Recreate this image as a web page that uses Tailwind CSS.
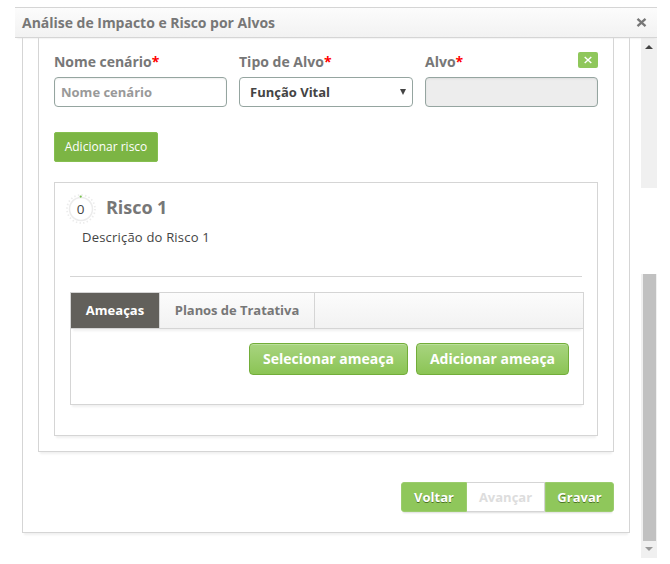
<!DOCTYPE html>
<html lang="pt-BR">
<head>
<meta charset="utf-8">
<title>Análise de Impacto e Risco por Alvos</title>
<script src="https://cdn.jsdelivr.net/npm/@tailwindcss/browser@4"></script>
</head>
<body class="h-[564px] w-[670px] overflow-hidden bg-white pl-[15px] pt-[7px] font-['Open_Sans','Noto_Sans',sans-serif] text-[13px] text-[#777]">
<div class="w-[642px]">
  <header class="relative flex h-[31px] items-center justify-between border-y border-[#d5d5d5] bg-linear-to-b from-[#fcfcfc] to-[#f2f2f2] pl-[7px] pr-[10px] shadow-[0_2px_2px_-2px_#ddd]">
    <h1 class="text-[14px] font-bold leading-5 tracking-[-0.02px]">Análise de Impacto e Risco por Alvos</h1>
    <button aria-label="Fechar"><svg class="block" width="11" height="11" viewBox="0 0 11 11"><path d="M1.5 1.8l8 7.4M9.5 1.8l-8 7.4" stroke="#777" stroke-width="2.3"/></svg></button>
  </header>
  <div class="flex h-[520px] justify-between">
    <main class="ml-[7px] h-[495px] w-[608px] border border-t-0 border-[#d5d5d5] px-[15px] shadow-[0_4px_2px_-2px_#f0f0f0]">
      <section class="h-[414px] w-[576px] border border-t-0 border-[#d5d5d5] px-[15px] pt-[14px] shadow-[0_4px_2px_-2px_#f0f0f0]">
        <div class="relative grid grid-cols-[173px_174px_173px] gap-x-3">
          <div>
            <label class="block h-[25px] text-[14px] font-bold leading-5 tracking-[-0.04px]">Nome cenário<span class="text-[#f00]">*</span></label>
            <div class="flex h-[30px] items-center rounded border border-[#95a5a0] px-[6px] pt-px font-bold text-[#999] shadow-[inset_0_1px_2px_#eee]">Nome cenário</div>
          </div>
          <div>
            <label class="block h-[25px] text-[14px] font-bold leading-5">Tipo de Alvo<span class="text-[#f00]">*</span></label>
            <div class="flex h-[30px] items-center justify-between rounded border border-[#95a5a0] pl-[10px] pr-[6px] pt-px font-bold text-[#444]">Função Vital<svg class="-mt-[2px]" width="6" height="6" viewBox="0 0 6 6"><path d="M0 0h6L3 6z" fill="#444"/></svg></div>
          </div>
          <div>
            <label class="block h-[25px] text-[14px] font-bold leading-5">Alvo<span class="text-[#f00]">*</span></label>
            <div class="h-[30px] rounded border border-[#95a5a0] bg-[#ededed] shadow-[inset_0_1px_2px_#ddd]"></div>
          </div>
          <button aria-label="Remover" class="absolute right-0 top-0 flex h-4 w-5 items-center justify-center rounded-[2px] bg-[#8fc75b]"><svg width="8" height="8" viewBox="0 0 8 8"><path d="M.7 .9l6.6 6.2M7.3 .9L.7 7.1" stroke="#fff" stroke-width="1.4"/></svg></button>
        </div>
        <button class="mt-[25px] flex h-[30px] w-[104px] items-center justify-center rounded-[2px] border border-[#86bf50] bg-[#7cb544] text-[12px] text-white">Adicionar risco</button>
        <article class="mt-[20px] h-[254px] w-[544px] border border-[#d5d5d5] px-[15px] pt-[9px] shadow-[0_4px_2px_-2px_#f0f0f0]">
          <div class="flex h-[33px] items-center">
            <svg class="-ml-[5px] mr-[9px]" width="32" height="34" viewBox="0 0 32 34">
              <circle cx="16" cy="17" r="11.5" fill="none" stroke="#ececec" stroke-width="1.5"/>
              <circle cx="16" cy="17" r="14" fill="none" stroke="#ececec" stroke-width="1.8" stroke-dasharray="1.4 2.265"/>
              <circle cx="15.7" cy="4.6" r="1.1" fill="#75bf49"/>
              <text x="15.5" y="22" text-anchor="middle" font-family="Open Sans" font-size="13.5" fill="#444">0</text>
            </svg>
            <h2 class="-mt-[3px] text-[18px] font-bold leading-6 tracking-[-0.05px]">Risco 1</h2>
          </div>
          <p class="ml-[12px] mt-[2px] h-[49px] leading-5 tracking-[0.2px] text-[#444]">Descrição do Risco 1</p>
          <hr class="border-[#d5d5d5]">
          <div class="-mr-[2px] mt-[15px] h-[113px] w-[514px] border border-[#d5d5d5] shadow-[0_4px_2px_-2px_#f0f0f0]">
            <div class="flex h-9 border-b border-[#d5d5d5] bg-linear-to-b from-[#fcfcfc] to-[#f2f2f2] font-bold shadow-[0_4px_2px_-2px_#f0f0f0]">
              <div class="flex w-[89px] items-center justify-center border-r border-[#d5d5d5] bg-[#62605b] text-white">Ameaças</div>
              <div class="flex w-[155px] items-center justify-center border-r border-[#d5d5d5] tracking-[-0.05px]">Planos de Tratativa</div>
            </div>
            <div class="flex justify-end gap-2 pr-[14px] pt-[14px] text-[14px] font-bold text-white [text-shadow:0_1px_0_#4c7624]">
              <button class="flex h-8 w-[159px] items-center justify-center rounded-[4px] border border-[#72ad39] bg-linear-to-b from-[#a8d47f] to-[#8bc454] pb-px shadow-[inset_0_1px_0_#bcdf9c]">Selecionar ameaça</button>
              <button class="flex h-8 w-[153px] items-center justify-center rounded-[4px] border border-[#72ad39] bg-linear-to-b from-[#a8d47f] to-[#8bc454] pb-px shadow-[inset_0_1px_0_#bcdf9c]">Adicionar ameaça</button>
            </div>
          </div>
        </article>
      </section>
      <div class="mt-[30px] flex justify-end">
        <div class="flex h-[30px] rounded-[3px] font-bold shadow-[0_3px_2px_-2px_#ddd]">
          <button class="w-[66px] rounded-l-[3px] border border-[#9bcc6d] bg-[#8fc75b] pt-px text-white [text-shadow:0_1px_0_#4c7624]">Voltar</button>
          <button class="w-[78px] border-y border-r border-[#d5d5d5] bg-white pt-px text-[#ddd]">Avançar</button>
          <button class="w-[69px] rounded-r-[3px] border border-[#9bcc6d] bg-[#8fc75b] pt-px text-white [text-shadow:0_1px_0_#4c7624]">Gravar</button>
        </div>
      </div>
    </main>
    <aside class="flex w-4 flex-col items-center">
      <div class="flex h-[150px] w-4 justify-center bg-[#f0f0f0] pt-[7px]"><svg width="8" height="4" viewBox="0 0 8 4"><path d="M4 0l4 4H0z" fill="#444"/></svg></div>
      <div class="mt-[86px] flex h-[284px] w-4 flex-col items-center bg-[#f0f0f0]">
        <div class="h-[267px] w-[13px] bg-[#c1c1c1]"></div>
        <svg class="mt-[6px]" width="8" height="4" viewBox="0 0 8 4"><path d="M0 0h8L4 4z" fill="#999"/></svg>
      </div>
    </aside>
  </div>
</div>
</body>
</html>
